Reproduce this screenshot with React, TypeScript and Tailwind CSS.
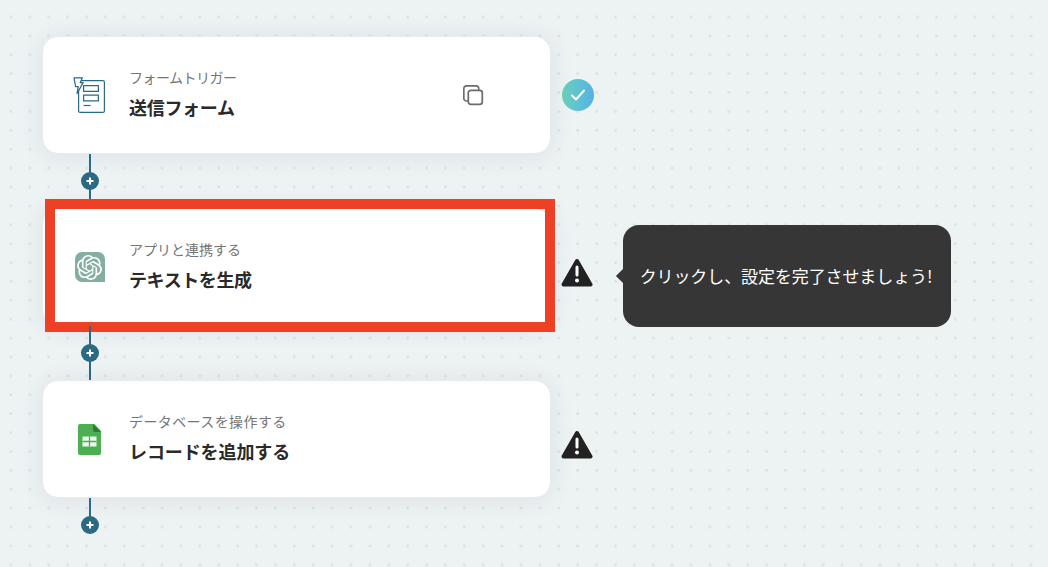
import React from "react";
import { SiOpenai } from "react-icons/si";

function FormIcon() {
  return (
    <svg className="mr-[2px]" width="32" height="36" viewBox="0 0 32 36" fill="none" stroke="#2b6a82" strokeWidth="1.2" strokeLinejoin="round">
      <rect x="5.6" y="3.6" width="25.8" height="31.8" rx="1.5" />
      <rect x="10.6" y="8.6" width="14.8" height="5.8" />
      <rect x="10.6" y="18.1" width="14.8" height="5.8" />
      <path d="M10.6 28.5h7" />
      <path d="M1 0.8h8.4L7.2 5.6h3L4 16.5 5.2 9.6H2.6z" fill="#fff" />
    </svg>
  );
}

function CopyIcon() {
  return (
    <svg width="22" height="22" viewBox="0 0 22 22" fill="none" stroke="#6b6b6b" strokeWidth="1.7">
      <rect x="6.3" y="6.3" width="14" height="14" rx="2.5" />
      <path d="M6 17.3H4a2.7 2.7 0 0 1-2.7-2.7V4A2.7 2.7 0 0 1 4 1.3h10.4A2.7 2.7 0 0 1 17 4v2" transform="translate(0.6 0.6) scale(0.95)" />
    </svg>
  );
}

function GptIcon() {
  return (
    <div className="flex h-[30px] w-[30px] items-center justify-center rounded-tl-[7px] rounded-tr-[7px] rounded-bl-[7px] bg-[#84ae9e]">
      <SiOpenai size={25} color="#fff" />
    </div>
  );
}

function SheetIcon() {
  return (
    <svg width="23" height="31" viewBox="0 0 23 31">
      <path d="M2 0h14.5L23 7v22a2 2 0 0 1-2 2H2a2 2 0 0 1-2-2V2a2 2 0 0 1 2-2z" fill="#4caf50" />
      <path d="M15 0l8 8h-6a2 2 0 0 1-2-2z" fill="#2f7d33" />
      <path d="M4.5 12.5h14v10h-14z" fill="#eef7ef" />
      <path d="M4.5 17.5h14M11.5 12.5v10" stroke="#4caf50" strokeWidth="1.3" />
    </svg>
  );
}

function Warning() {
  return (
    <svg width="32" height="30" viewBox="0 0 32 30">
      <path d="M16 3 L29.5 26.5 H2.5 Z" fill="#222" stroke="#222" strokeWidth="4" strokeLinejoin="round" />
      <rect x="14.5" y="7.5" width="3" height="11" rx="1.5" fill="#fff" />
      <circle cx="16" cy="22.6" r="2" fill="#fff" />
    </svg>
  );
}

function Done() {
  return (
    <div className="flex h-8 w-8 items-center justify-center rounded-full bg-gradient-to-r from-[#6bd0bb] to-[#55b2e4]">
      <svg width="16" height="14" viewBox="0 0 16 14" fill="none" stroke="#fff" strokeWidth="2" strokeLinecap="round" strokeLinejoin="round">
        <path d="M2 7.5 6 11.5 14 2.5" />
      </svg>
    </div>
  );
}

function Connector({ last }: { last?: boolean }) {
  return (
    <div className={`relative ml-[47px] w-[2px] bg-[#2b6a82] ${last ? "h-[30px]" : "h-[54px]"}`}>
      <div className="absolute left-1/2 top-[18px] flex h-[18px] w-[18px] -translate-x-1/2 items-center justify-center rounded-full bg-[#2b6a82]">
        <svg width="8" height="8" viewBox="0 0 8 8" stroke="#fff" strokeWidth="2">
          <path d="M4 0.5v7M0.5 4h7" />
        </svg>
      </div>
    </div>
  );
}

function Card({ icon, label, title, children, highlighted, labelClass, titleClass }: { icon: React.ReactNode; label: string; title: string; children?: React.ReactNode; highlighted?: boolean; labelClass?: string; titleClass?: string }) {
  return (
    <div className="relative flex h-[118px] w-[509px] items-center rounded-[16px] border border-[#e6ecec] bg-white shadow-[0_2px_24px_rgba(60,80,90,0.09)]">
      <div className="flex w-[86px] justify-center pl-[7px]">{icon}</div>
      <div className="flex flex-col pb-[3px]">
        <div className={`text-[14px] leading-[20px] text-[#757575] ${labelClass ?? ""}`}>{label}</div>
        <div className={`mt-[7px] text-[18px] font-bold leading-[26px] text-[#2a2a2a] ${titleClass ?? ""}`}>{title}</div>
      </div>
      {children}
      {highlighted && <div className="absolute -bottom-[7px] -right-[5px] -top-[10px] left-[2px] border-[10px] border-[#ee4025]" />}
    </div>
  );
}

export default function App() {
  return (
    <div
      className="h-[567px] w-[1048px] overflow-hidden bg-[#edf2f3] bg-[radial-gradient(circle,#dce3e5_1.2px,transparent_1.6px)] bg-[size:18.9px_18.9px] bg-[position:1.5px_7.5px] pl-[42px] pt-[36px]"
      style={{ fontFamily: '"Noto Sans CJK JP", "Noto Sans", sans-serif' }}
    >
      <div className="flex items-center gap-[11px]">
        <Card icon={<FormIcon />} label="フォームトリガー" labelClass="tracking-[-0.5px]" title="送信フォーム" titleClass="tracking-[-0.3px]">
          <div className="absolute left-[419px] top-[47px]"><CopyIcon /></div>
        </Card>
        <Done />
      </div>
      <Connector />
      <div className="flex h-[118px] items-start gap-[10px]">
        <Card icon={<GptIcon />} label="アプリと連携する" title="テキストを生成" titleClass="tracking-[-0.4px]" highlighted />
        <div className="mt-[50px]"><Warning /></div>
        <div className="relative ml-[20px] mt-[17px] flex h-[102px] w-[328px] items-center justify-center rounded-[16px] bg-[#363636] pr-[2px] text-[17px] text-white">
          <div className="absolute -left-[5px] top-[46px] h-[10px] w-[10px] rotate-45 bg-[#363636]" />
          <span className="tracking-[-0.1px]">クリックし、設定を完了させましょう!</span>
        </div>
      </div>
      <Connector />
      <div className="flex h-[118px] items-start gap-[10px]">
        <Card icon={<SheetIcon />} label="データベースを操作する" labelClass="tracking-[0.4px]" title="レコードを追加する" titleClass="tracking-[-0.1px]" />
        <div className="mt-[50px]"><Warning /></div>
      </div>
      <Connector last />
    </div>
  );
}
